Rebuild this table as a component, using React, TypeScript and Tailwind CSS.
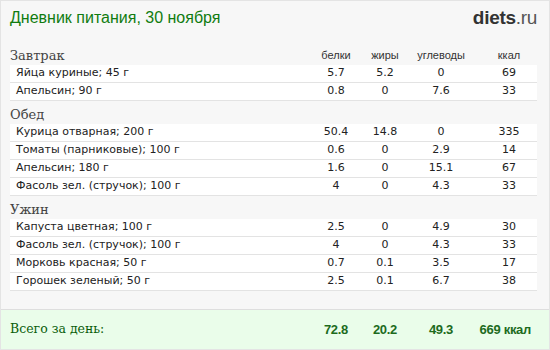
const sections = [
  {
    title: 'Завтрак',
    header: true,
    rows: [
      ['Яйца куриные; 45 г', '5.7', '5.2', '0', '69'],
      ['Апельсин; 90 г', '0.8', '0', '7.6', '33'],
    ],
  },
  {
    title: 'Обед',
    rows: [
      ['Курица отварная; 200 г', '50.4', '14.8', '0', '335'],
      ['Томаты (парниковые); 100 г', '0.6', '0', '2.9', '14'],
      ['Апельсин; 180 г', '1.6', '0', '15.1', '67'],
      ['Фасоль зел. (стручок); 100 г', '4', '0', '4.3', '33'],
    ],
  },
  {
    title: 'Ужин',
    rows: [
      ['Капуста цветная; 100 г', '2.5', '0', '4.9', '30'],
      ['Фасоль зел. (стручок); 100 г', '4', '0', '4.3', '33'],
      ['Морковь красная; 50 г', '0.7', '0.1', '3.5', '17'],
      ['Горошек зеленый; 50 г', '2.5', '0.1', '6.7', '38'],
    ],
  },
];

function Cells({ values, className }: { values: string[]; className: string }) {
  return (
    <div className={`flex ${className}`}>
      <div className="w-[50px] text-center">{values[0]}</div>
      <div className="w-[48px] text-center">{values[1]}</div>
      <div className="w-[64px] text-center">{values[2]}</div>
      <div className="w-[8px]" />
      <div className="w-[56px] text-center">{values[3]}</div>
    </div>
  );
}

export default function App() {
  return (
    <div className="w-[550px] h-[350px] bg-[#f7f7f7] border border-[#e4e4e4] flex flex-col">
      <div className="flex justify-between items-start h-[41px] pl-[9px] pr-[12px]">
        <div className="pt-[5px] text-[16px] text-[#107c10] font-['Liberation_Sans',sans-serif]">
          Дневник питания, 30 ноября
        </div>
        <div className="pt-[3px] text-[19px] text-[#333] font-['Liberation_Sans',sans-serif] tracking-[-0.3px]">
          <span className="font-bold">diets</span>
          <span className="text-[#555]">.ru</span>
        </div>
      </div>

      {sections.map((s) => (
        <div key={s.title} className="pl-[9px] pr-[12px]">
          <div className="h-[23px] flex items-end justify-between pb-[3px]">
            <div className="text-[13px] leading-none text-[#444] font-['DejaVu_Serif',serif]">{s.title}</div>
            {s.header && (
              <Cells
                values={['белки', 'жиры', 'углеводы', 'ккал']}
                className="text-[11px] leading-none text-[#333] font-['Liberation_Sans',sans-serif] pb-[1px]"
              />
            )}
          </div>
          {s.rows.map((r, i) => (
            <div
              key={i}
              className="h-[18px] bg-white border-b border-[#e3e3e3] flex items-center text-[11px] text-[#222] font-['DejaVu_Sans',sans-serif]"
            >
              <div className="flex-1 pl-[6px]">{r[0]}</div>
              <Cells values={r.slice(1)} className="" />
            </div>
          ))}
        </div>
      ))}

      <div className="flex-1" />
      <div className="h-[40px] border-t border-[#dedede] bg-[#eafdea] flex items-center pl-[9px] pr-[12px]">
        <div className="flex-1 text-[12.5px] text-[#0b5e0b] font-['DejaVu_Serif',serif]">Всего за день:</div>
        <div className="flex text-[13px] font-bold text-[#1d6b1d] font-['Liberation_Sans',sans-serif] tracking-[-0.3px]">
          <div className="w-[50px] text-center">72.8</div>
          <div className="w-[48px] text-center">20.2</div>
          <div className="w-[64px] text-center">49.3</div>
          <div className="w-[64px] text-right pr-[6px]">669 ккал</div>
        </div>
      </div>
    </div>
  );
}
